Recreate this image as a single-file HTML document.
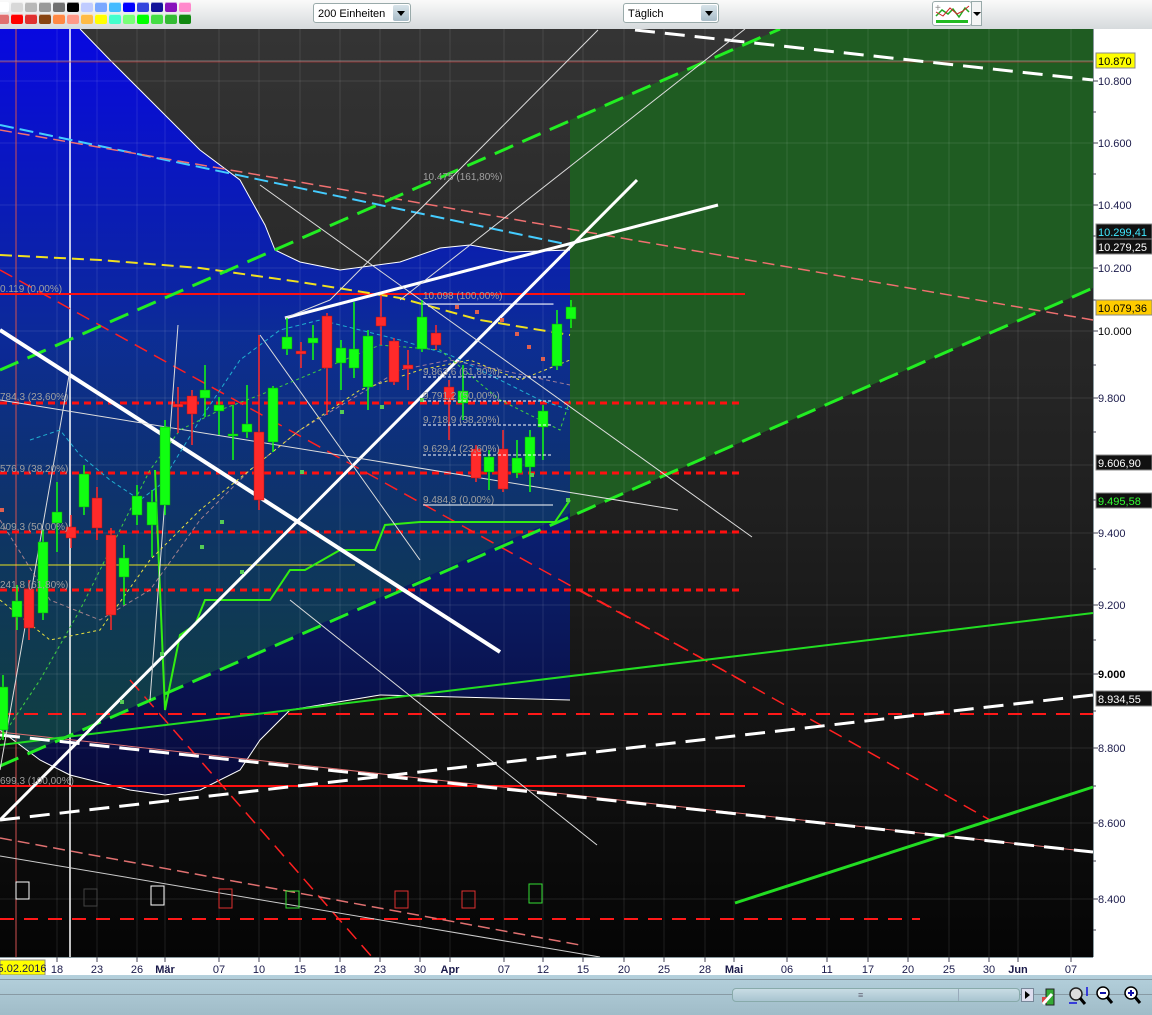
<!DOCTYPE html>
<html><head><meta charset="utf-8">
<style>
html,body{margin:0;padding:0;width:1152px;height:1015px;overflow:hidden;background:#c8d8e0;font-family:"Liberation Sans",sans-serif;}
#tb{position:absolute;left:0;top:0;width:1152px;height:29px;background:linear-gradient(#fafafa,#d6dadd);}
.sw{position:absolute;width:12px;height:10px;border-radius:2px;box-shadow:inset 0 1px 0 rgba(255,255,255,.6);}
.dd{position:absolute;top:3px;height:20px;background:#fff;border:1px solid #9aa;border-radius:3px;font-size:11px;line-height:20px;padding-left:4px;box-sizing:border-box;}
.dd b{position:absolute;right:1px;top:1px;width:16px;height:16px;background:linear-gradient(#d8e4ea,#a8bcc8);border-radius:2px;}
.dd b:after{content:"";position:absolute;left:4px;top:6px;border:4px solid transparent;border-top:5px solid #000;}
#bot{position:absolute;left:0;top:975px;width:1152px;height:40px;background:linear-gradient(#b4d0dc,#a0bcc8);}
</style></head><body>
<div id="tb">
<div id="sws"></div>
<div class="dd" style="left:313px;width:98px">200 Einheiten<b></b></div>
<div class="dd" style="left:623px;width:96px">Täglich<b></b></div>
<div style="position:absolute;left:932px;top:1px;width:40px;height:25px;background:#fff;border:1px solid #9aa;border-radius:3px;box-sizing:border-box">
<svg width="38" height="23"><polyline points="3,14 9,8 15,12 20,7 26,15 32,6 36,10" fill="none" stroke="#2a2" stroke-width="1.5"/><polyline points="3,10 10,14 17,6 24,12 30,9 36,4" fill="none" stroke="#c22" stroke-width="1"/><rect x="3" y="18" width="32" height="3" fill="#2b2"/><text x="2" y="9" font-size="10" fill="#888">+</text></svg></div>
<div style="position:absolute;left:971px;top:1px;width:11px;height:25px;background:#f4f4f4;border:1px solid #9aa;box-sizing:border-box"><div style="position:absolute;left:1px;top:10px;border:4px solid transparent;border-top:4px solid #000"></div></div>
</div>
<script>
var c1=["#fff","#d8d8d8","#b8b8b8","#989898","#707070","#000","#c0ccff","#7aa8ff","#44bbff","#0000ff","#3344dd","#111199","#8811bb","#ff88cc"];
var c2=["#e07070","#ff0000","#e03030","#884411","#ff8844","#ff9988","#ffbb44","#ffff00","#44ffcc","#77ff77","#00ff00","#44dd44","#33bb33","#118811"];
var h="";for(var i=0;i<14;i++){h+='<div class="sw" style="left:'+(i*14-3)+'px;top:2px;background:'+c1[i]+'"></div><div class="sw" style="left:'+(i*14-3)+'px;top:14px;background:'+c2[i]+'"></div>';}
document.getElementById("sws").innerHTML=h;
</script>
<svg style="position:absolute;left:0;top:29px" width="1152" height="946" viewBox="0 29 1152 946">
<defs>
<linearGradient id="bg" x1="0" y1="0" x2="0" y2="1"><stop offset="0" stop-color="#343434"/><stop offset=".55" stop-color="#1e1e1e"/><stop offset="1" stop-color="#050505"/></linearGradient>
<linearGradient id="bl" gradientUnits="userSpaceOnUse" x1="0" y1="29" x2="0" y2="800"><stop offset="0" stop-color="#0808e0"/><stop offset=".4" stop-color="#0c2a98"/><stop offset=".75" stop-color="#0a1a60"/><stop offset="1" stop-color="#080838"/></linearGradient>
<linearGradient id="ch" gradientUnits="userSpaceOnUse" x1="0" y1="300" x2="0" y2="760"><stop offset="0" stop-color="#1a8040" stop-opacity="0"/><stop offset="1" stop-color="#1a8040" stop-opacity=".45"/></linearGradient>
<clipPath id="band"><polygon points="0,29 80,29 110,60 200,150 240,180 265,225 275,250 300,262 340,270 400,262 440,248 470,245 510,252 570,250 570,700 380,695 290,710 260,740 240,770 200,790 165,795 130,790 70,775 40,760 0,730"/></clipPath>
</defs>
<rect x="0" y="29" width="1093" height="928" fill="url(#bg)"/>
<polygon points="0,29 80,29 110,60 200,150 240,180 265,225 275,250 300,262 340,270 400,262 440,248 470,245 510,252 570,250 570,700 380,695 290,710 260,740 240,770 200,790 165,795 130,790 70,775 40,760 0,730" fill="url(#bl)"/>
<polygon clip-path="url(#band)" points="0,370 780,29 780,420 0,766" fill="url(#ch)"/>
<polygon points="570,120 780,29 1093,29 1093,288 570,517" fill="#1f5c22"/>
<g stroke="#ffffff" stroke-opacity=".1" stroke-width="1">
<path d="M57 29V957M97 29V957M137 29V957M165 29V957M219 29V957M259 29V957M300 29V957M340 29V957M380 29V957M420 29V957M450 29V957M504 29V957M543 29V957M583 29V957M624 29V957M664 29V957M705 29V957M734 29V957M787 29V957M827 29V957M868 29V957M908 29V957M949 29V957M989 29V957M1018 29V957M1071 29V957"/>
<path d="M0 81H1093M0 143H1093M0 205H1093M0 268H1093M0 331H1093M0 398H1093M0 465H1093M0 533H1093M0 605H1093M0 674H1093M0 748H1093M0 823H1093M0 899H1093"/>
</g>
<g fill="none">
<path d="M80,29 110,60 200,150 240,180 265,225 275,250 300,262 340,270 400,262 440,248 470,245 510,252 570,250" stroke="#fff"/>
<path d="M0,730 40,760 70,775 130,790 165,795 200,790 240,770 260,740 290,710 380,695 570,700" stroke="#fff"/>
<line x1="16" y1="29" x2="16" y2="957" stroke="#d05050"/>
<line x1="70" y1="29" x2="70" y2="957" stroke="#fff" stroke-width="1.5"/>
<line x1="0" y1="61" x2="1093" y2="61" stroke="#bbb" stroke-opacity=".5"/>
<line x1="0" y1="62" x2="1093" y2="62" stroke="#c03030" stroke-opacity=".6"/>
<line x1="0" y1="294" x2="745" y2="294" stroke="#ff1010" stroke-width="2"/>
<line x1="0" y1="786" x2="745" y2="786" stroke="#ff1010" stroke-width="2"/>
<g stroke="#ff1010" stroke-width="3" stroke-dasharray="7,5"><path d="M0 403H740M0 473H740M0 532H740M0 590H740"/></g>
<g stroke="#ff1818" stroke-width="2" stroke-dasharray="14,10"><path d="M0 714H1093M0 919H920"/></g>
<line x1="0" y1="125" x2="570" y2="245" stroke="#44ccff" stroke-width="2" stroke-dasharray="14,6"/>
<line x1="0" y1="130" x2="1093" y2="320" stroke="#f07070" stroke-width="1.5" stroke-dasharray="12,6"/>
<path d="M0,255 100,260 200,268 300,282 400,298 480,320 570,335" stroke="#f0e020" stroke-width="2" stroke-dasharray="12,6"/>
<line x1="0" y1="270" x2="750" y2="685" stroke="#ff2020" stroke-width="1.5" stroke-dasharray="14,8"/>
<line x1="130" y1="680" x2="372" y2="957" stroke="#ff2020" stroke-width="1.5" stroke-dasharray="14,8"/>
<line x1="580" y1="590" x2="990" y2="820" stroke="#ff2020" stroke-width="1.5" stroke-dasharray="14,8"/>
<line x1="0" y1="838" x2="580" y2="945" stroke="#e07070" stroke-width="1.5" stroke-dasharray="12,6"/>
<line x1="0" y1="732" x2="1093" y2="852" stroke="#e07070" stroke-width="1"/>
<line x1="0" y1="856" x2="600" y2="957" stroke="#ccc" stroke-width="1"/>
<line x1="0" y1="370" x2="780" y2="29" stroke="#22ee22" stroke-width="3" stroke-dasharray="20,10"/>
<line x1="0" y1="766" x2="1093" y2="288" stroke="#22ee22" stroke-width="3" stroke-dasharray="20,10"/>
<line x1="0" y1="745" x2="1093" y2="613" stroke="#22dd22" stroke-width="2"/>
<line x1="735" y1="903" x2="1093" y2="787" stroke="#22dd22" stroke-width="3"/>
<line x1="0" y1="820" x2="1093" y2="695" stroke="#fff" stroke-width="3" stroke-dasharray="20,10"/>
<line x1="0" y1="735" x2="1093" y2="852" stroke="#fff" stroke-width="3" stroke-dasharray="20,10"/>
<line x1="635" y1="30" x2="1093" y2="80" stroke="#fff" stroke-width="3" stroke-dasharray="20,10"/>
<line x1="0" y1="565" x2="355" y2="565" stroke="#e8e020" stroke-width="1"/>
<path d="M155,470 165,710 180,635 195,625 205,600 270,600 290,570 305,570 340,550 375,550 385,525 420,522 555,522 570,500" stroke="#33ee11" stroke-width="2"/>
<line x1="0" y1="330" x2="500" y2="652" stroke="#fff" stroke-width="4"/>
<line x1="0" y1="820" x2="637" y2="180" stroke="#fff" stroke-width="3"/>
<line x1="285" y1="318" x2="718" y2="205" stroke="#fff" stroke-width="3"/>
<g stroke="#ddd" stroke-width="1">
<line x1="260" y1="185" x2="752" y2="537"/><line x1="290" y1="600" x2="597" y2="845"/>
<line x1="0" y1="400" x2="678" y2="510"/><line x1="400" y1="300" x2="745" y2="29"/>
<line x1="285" y1="318" x2="330" y2="300"/><line x1="330" y1="300" x2="598" y2="30"/>
<line x1="150" y1="700" x2="178" y2="325"/><line x1="0" y1="770" x2="70" y2="370"/>
<line x1="260" y1="335" x2="420" y2="560"/>
</g>
<path d="M30,440 60,430 80,455 110,480 140,500 160,485 200,420 240,360 280,330 320,320 360,330 400,340 450,355 500,380 540,400 570,410" stroke="#20b0d0" stroke-dasharray="4,3"/>
<path d="M0,520 50,600 100,620 150,590 200,520 250,470 300,430 350,400 400,370 450,360 500,370 570,385" stroke="#e0a0a0" stroke-opacity=".7" stroke-dasharray="4,3"/>
<path d="M0,600 50,640 100,630 150,560 200,510 250,470 300,430 360,390 420,370 470,360 520,380 570,360" stroke="#e8e040" stroke-dasharray="3,3"/>
<path d="M0,740 40,680 80,610 110,550 150,470 180,430 220,410 260,395 320,370 380,345 440,350 500,400 560,430 570,400" stroke="#40d040" stroke-dasharray="3,3"/>
</g>
<g id="cd"></g>
<g fill="#55cc55"><rect x="160" y="652" width="4" height="4"/><rect x="120" y="700" width="4" height="4"/><rect x="220" y="520" width="4" height="4"/><rect x="300" y="470" width="4" height="4"/><rect x="340" y="410" width="4" height="4"/><rect x="380" y="405" width="4" height="4"/><rect x="420" y="398" width="4" height="4"/><rect x="530" y="473" width="4" height="4"/><rect x="566" y="498" width="4" height="4"/><rect x="200" y="545" width="4" height="4"/><rect x="240" y="570" width="4" height="4"/></g>
<g fill="#e06050"><rect x="0" y="508" width="4" height="4"/><rect x="455" y="305" width="4" height="4"/><rect x="475" y="310" width="4" height="4"/><rect x="500" y="318" width="4" height="4"/><rect x="515" y="332" width="4" height="4"/><rect x="527" y="345" width="4" height="4"/><rect x="541" y="357" width="4" height="4"/></g>
<g font-size="10" fill="#a0a0a0">
<text x="423" y="180">10.475 (161,80%)</text><text x="0" y="292">0.119 (0,00%)</text><text x="423" y="299">10.098 (100,00%)</text>
<text x="423" y="375">9.863,6 (61,80%)</text><text x="423" y="399">9.791,2 (50,00%)</text><text x="423" y="423">9.718,9 (38,20%)</text>
<text x="423" y="452">9.629,4 (23,60%)</text><text x="423" y="503">9.484,8 (0,00%)</text>
<text x="0" y="400">784,3 (23,60%)</text><text x="0" y="472">576,9 (38,20%)</text><text x="0" y="530">409,3 (50,00%)</text><text x="0" y="588">241,8 (61,80%)</text><text x="0" y="784">699,3 (100,00%)</text>
</g>
<g fill="none" stroke-width="1">
<rect x="423" y="304" width="130" height="0.1" stroke="#fff"/>
<path d="M423 377H553M423 401H553M423 425H553M423 455H553" stroke="#fff" stroke-dasharray="3,2"/>
<path d="M423 505H553" stroke="#fff"/>
<rect x="16" y="882" width="13" height="17" stroke="#fff"/><rect x="84" y="889" width="13" height="17" stroke="#444"/>
<rect x="151" y="886" width="13" height="19" stroke="#fff"/><rect x="219" y="889" width="13" height="19" stroke="#e03030"/>
<rect x="286" y="891" width="13" height="17" stroke="#33dd33"/><rect x="395" y="891" width="13" height="17" stroke="#e03030"/>
<rect x="462" y="891" width="13" height="17" stroke="#e03030"/><rect x="529" y="884" width="13" height="19" stroke="#33dd33"/>
</g>
<rect x="1093" y="29" width="59" height="928" fill="#fff"/>
<line x1="1093.5" y1="29" x2="1093.5" y2="957" stroke="#8a9aa0"/>
<rect x="0" y="957" width="1152" height="18" fill="#fff"/>
<line x1="0" y1="957.5" x2="1093" y2="957.5" stroke="#8a9aa0"/>
<g font-size="11" fill="#1a1a4a">
<text x="1098" y="85">10.800</text><text x="1098" y="147">10.600</text><text x="1098" y="209">10.400</text><text x="1098" y="272">10.200</text>
<text x="1098" y="335" fill="#000">10.000</text><text x="1098" y="402">9.800</text><text x="1098" y="537">9.400</text><text x="1098" y="609">9.200</text>
<text x="1098" y="678" fill="#000" font-weight="bold">9.000</text><text x="1098" y="752">8.800</text><text x="1098" y="827">8.600</text><text x="1098" y="903">8.400</text>
</g>
<g stroke="#445" stroke-width="1"><path d="M1093 81h5M1093 143h5M1093 205h5M1093 268h5M1093 331h5M1093 398h5M1093 533h5M1093 605h5M1093 674h5M1093 748h5M1093 823h5M1093 899h5M1093 112h3M1093 174h3M1093 236h3M1093 300h3M1093 365h3M1093 432h3M1093 500h3M1093 569h3M1093 640h3M1093 711h3M1093 786h3M1093 861h3M1093 930h3"/></g>
<g font-size="11">
<rect x="1096" y="53" width="39" height="15" fill="#ffff00" stroke="#888"/><text x="1098" y="65">10.870</text>
<rect x="1096" y="224" width="56" height="15" fill="#111" stroke="#888"/><text x="1098" y="236" fill="#40e8ff">10.299,41</text>
<rect x="1096" y="239" width="56" height="15" fill="#111" stroke="#888"/><text x="1098" y="251" fill="#fff">10.279,25</text>
<rect x="1096" y="300" width="56" height="15" fill="#ffcc00" stroke="#888"/><text x="1098" y="312">10.079,36</text>
<rect x="1096" y="455" width="56" height="15" fill="#111" stroke="#888"/><text x="1098" y="467" fill="#fff">9.606,90</text>
<rect x="1096" y="493" width="56" height="15" fill="#111" stroke="#888"/><text x="1098" y="505" fill="#33ff33">9.495,58</text>
<rect x="1096" y="691" width="56" height="15" fill="#111" stroke="#888"/><text x="1098" y="703" fill="#fff">8.934,55</text>
</g>
<g stroke="#445"><path d="M57 957v5M97 957v5M137 957v5M165 957v5M219 957v5M259 957v5M300 957v5M340 957v5M380 957v5M420 957v5M450 957v5M504 957v5M543 957v5M583 957v5M624 957v5M664 957v5M705 957v5M734 957v5M787 957v5M827 957v5M868 957v5M908 957v5M949 957v5M989 957v5M1018 957v5M1071 957v5"/></g>
<rect x="0" y="960" width="45" height="15" fill="#ffff00" stroke="#888"/>
<g font-size="11" fill="#1a1a4a" text-anchor="middle">
<text x="22" y="972">5.02.2016</text><text x="57" y="973">18</text><text x="97" y="973">23</text><text x="137" y="973">26</text><text x="165" y="973" font-weight="bold">Mär</text>
<text x="219" y="973">07</text><text x="259" y="973">10</text><text x="300" y="973">15</text><text x="340" y="973">18</text><text x="380" y="973">23</text><text x="420" y="973">30</text>
<text x="450" y="973" font-weight="bold">Apr</text><text x="504" y="973">07</text><text x="543" y="973">12</text><text x="583" y="973">15</text><text x="624" y="973">20</text><text x="664" y="973">25</text>
<text x="705" y="973">28</text><text x="734" y="973" font-weight="bold">Mai</text><text x="787" y="973">06</text><text x="827" y="973">11</text><text x="868" y="973">17</text><text x="908" y="973">20</text>
<text x="949" y="973">25</text><text x="989" y="973">30</text><text x="1018" y="973" font-weight="bold">Jun</text><text x="1071" y="973">07</text>
</g>
</svg>
<div id="bot">
<div style="position:absolute;left:0;top:4px;width:1152px;height:1px;background:#889aa4"></div>
<div style="position:absolute;left:0;top:19px;width:1152px;height:1px;background:#889aa4"></div>
<div style="position:absolute;left:732px;top:13px;width:288px;height:14px;border:1px solid #8aa;border-radius:4px;background:linear-gradient(#c8dce4,#a8c4d0);box-sizing:border-box"><div style="position:absolute;left:125px;top:1px;font-size:9px;color:#667">≡</div><div style="position:absolute;left:225px;top:0;width:1px;height:12px;background:#9ab"></div></div>
<div style="position:absolute;left:1021px;top:13px;width:13px;height:14px;border:1px solid #789;background:#dde;box-sizing:border-box"><div style="position:absolute;left:3px;top:2px;border:4px solid transparent;border-left:5px solid #000;border-right:0"></div></div>
<svg style="position:absolute;left:1040px;top:10px" width="112" height="22">
<rect x="6" y="4" width="8" height="16" fill="#33aa33" stroke="#222"/><rect x="2" y="12" width="5" height="6" fill="#d44"/><path d="M3 19l9-10" stroke="#fff" stroke-width="3"/>
<circle cx="36" cy="9" r="6" fill="#ddd" stroke="#222" stroke-width="1.5"/><path d="M40 13l5 6" stroke="#000" stroke-width="3"/><path d="M47 2v9M29 18h8" stroke="#11d" stroke-width="1.5"/>
<circle cx="63" cy="8" r="6" fill="#fff" stroke="#000" stroke-width="1.5"/><path d="M60 8h6" stroke="#11a" stroke-width="2"/><path d="M67 12l5 6" stroke="#000" stroke-width="3"/>
<circle cx="91" cy="8" r="6" fill="#fff" stroke="#000" stroke-width="1.5"/><path d="M88 8h6M91 5v6" stroke="#11a" stroke-width="2"/><path d="M95 12l5 6" stroke="#000" stroke-width="3"/>
</svg>
</div>
<script>
var C=[[3,687,730,675,740,1],[17,601,617,585,630,1],[29,589,628,580,640,0],[43,542,613,530,620,1],[57,512,523,482,552,1],[71,527,538,515,548,0],[84,474,507,465,515,1],[97,498,528,487,540,0],[111,535,615,528,630,0],[124,558,577,545,605,1],[137,496,515,485,525,1],[152,502,525,490,557,1],[165,427,505,420,515,1],[178,404,407,387,433,0],[192,396,414,390,445,0],[205,390,398,365,417,1],[219,405,411,397,435,1],[233,434,436,405,460,1],[247,424,432,385,438,1],[259,432,500,335,510,0],[273,388,442,386,452,1],[287,337,349,318,355,1],[301,351,354,342,368,0],[313,338,343,325,360,1],[327,316,368,313,415,0],[341,348,363,340,390,1],[354,349,368,302,378,1],[368,336,387,330,410,1],[381,317,326,295,345,0],[394,341,382,338,385,0],[408,365,369,350,390,0],[422,317,349,300,352,1],[436,333,345,325,350,0],[449,387,400,380,440,0],[463,391,403,365,420,1],[476,449,478,445,482,0],[489,457,472,450,490,1],[503,449,489,430,492,0],[517,458,473,440,478,1],[530,437,467,430,492,1],[543,411,427,405,460,1],[557,324,366,310,370,1],[571,307,319,300,328,1]];
var s="";C.forEach(function(c){var col=c[5]?"#11ff11":"#ff2a2a",ed=c[5]?"#0a9a0a":"#b01010";s+='<line x1="'+c[0]+'" y1="'+c[3]+'" x2="'+c[0]+'" y2="'+c[4]+'" stroke="'+col+'" stroke-width="1.5"/><rect x="'+(c[0]-5)+'" y="'+c[1]+'" width="10" height="'+Math.max(2,c[2]-c[1])+'" fill="'+col+'" stroke="'+ed+'" stroke-width="0.5"/>';});
document.getElementById("cd").innerHTML=s;
</script>
</body></html>
